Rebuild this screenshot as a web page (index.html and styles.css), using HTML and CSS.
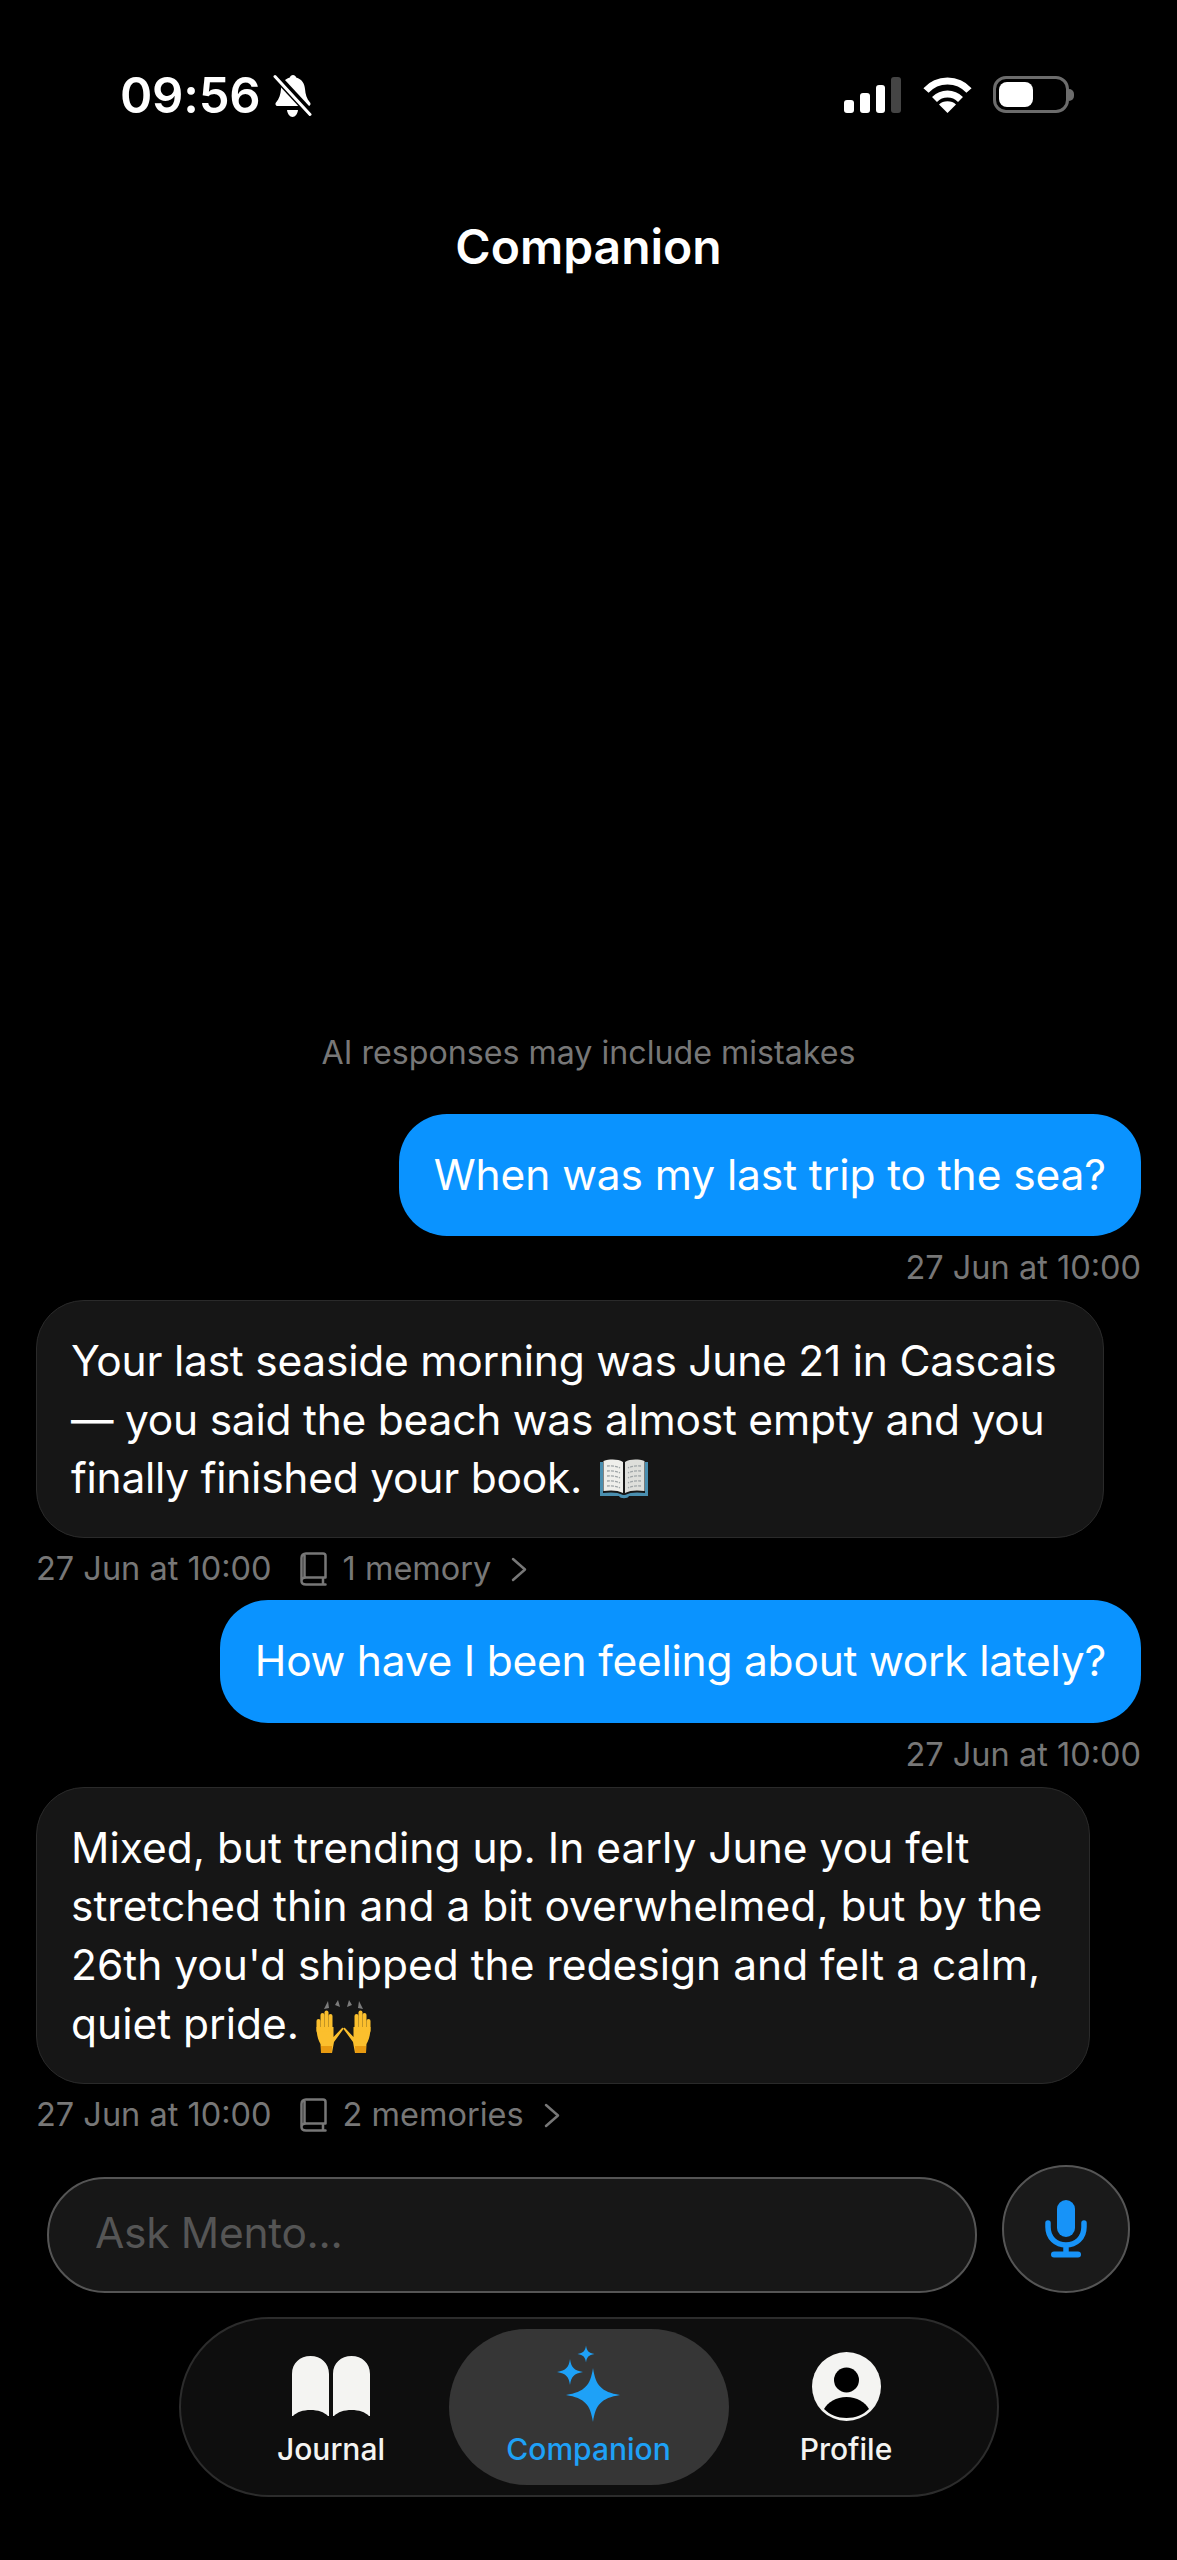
FILE: index.html
```html
<!DOCTYPE html>
<html lang="en">
<head>
    <meta charset="UTF-8">
    <meta name="viewport" content="width=device-width, initial-scale=1.0">
    <title>Companion</title>
    <link rel="stylesheet" href="styles.css">
</head>
<body>
    <div class="phone">
        <div class="status">
            <div class="status-left">
                <span class="clock">09:56</span>
                <svg class="bell" viewBox="0 0 40 44">
                    <path fill="#fff" d="M20 1c1.500 0 2.800 1.100 3.200 2.600 5.500 1.500 8.300 6 8.800 11.400.4 5 1.600 9.600 5 13.500 1.200 1.500.3 3.500-1.700 3.500H4.700c-2 0-2.900-2-1.700-3.500 3.400-3.900 4.600-8.500 5-13.500.5-5.400 3.300-9.900 8.800-11.400C17.200 2.100 18.500 1 20 1z"/>
                    <path fill="#fff" d="M14 36h11c-.5 4-2.800 7-5.500 7s-5-3-5.500-7z"/>
                    <path stroke="#000" stroke-width="8" d="M0 -1 40 42"/>
                    <path stroke="#fff" stroke-width="3" stroke-linecap="round" d="M2 2.500 37 40.500"/>
                </svg>
            </div>
            <div class="status-right">
                <div class="signal">
                    <i class="bar bar-1"></i>
                    <i class="bar bar-2"></i>
                    <i class="bar bar-3"></i>
                    <i class="bar bar-4"></i>
                </div>
                <svg class="wifi" viewBox="0 0 49 36">
                    <g fill="none" stroke="#fff" stroke-width="7">
                        <path d="M3 13.500C8.500 7.500 16 4 24.500 4S40.500 7.500 46 13.500"/>
                        <path d="M11.500 22.500C15 19 19.500 17 24.500 17S34 19 37.500 22.500"/>
                    </g>
                    <path fill="#fff" d="M24.500 36 16 27.500c2.200-2 5.200-3.200 8.500-3.200s6.300 1.200 8.500 3.200z"/>
                </svg>
                <div class="battery">
                    <div class="battery-body"><div class="battery-fill"></div></div>
                    <div class="battery-nub"></div>
                </div>
            </div>
        </div>

        <h1 class="title">Companion</h1>

        <div class="chat">
            <p class="notice">AI responses may include mistakes</p>

            <div class="bubble bubble-me">When was my last trip to the sea?</div>
            <div class="meta meta-me">27 Jun at 10:00</div>

            <div class="bubble bubble-ai bubble-tight">Your last seaside morning was June 21 in Cascais<br>— you said the beach was almost empty and you<br>finally finished your book. <svg class="emoji emoji-book" viewBox="0 0 48 41">
                    <path fill="#4a8fb0" d="M0 3h3v31c7-1 15-1 20 2h2c5-3 13-3 20-2V3h3v34H29c-1 3-9 3-10 0H0z"/>
                    <path fill="#efefeb" d="M3.500 2c6.500-2 14.500-2 19.500 1v31c-5-3-13-3-19.500-2z"/>
                    <path fill="#dedfdb" d="M44.500 2C38-.0 30-.0 25 3v31c5-3 13-3 19.500-2z"/>
                    <path fill="none" stroke="#a0a6a8" stroke-width="1.300" stroke-dasharray="3 1" d="M7 7c4-.5 9 0 13 2M7 12c4-.5 9 0 13 2M7 17c4-.5 9 0 13 2M7 22c4-.5 9 0 13 2M7 27c4-.5 9 0 13 2M41 7c-4-.5-9 0-13 2M41 12c-4-.5-9 0-13 2M41 17c-4-.5-9 0-13 2M41 22c-4-.5-9 0-13 2M41 27c-4-.5-9 0-13 2"/>
                </svg></div>
            <div class="meta meta-ai">
                <span>27 Jun at 10:00</span>
                <span class="memory">
                    <svg class="memory-book" viewBox="0 0 27 34"><path fill="none" stroke="#777" stroke-width="2.500" stroke-linejoin="round" stroke-linecap="round" d="M1.500 28.500V6c0-2.800 1.700-4.500 4.500-4.500h17c1.500 0 2.500 1 2.500 2.500v21.500H6c-3 0-4.500 1.500-4.500 3.500S3 32.500 6 32.500h19.500M23 25.500v7M4.500 3v22"/></svg>
                    1 memory
                    <svg class="chevron" viewBox="0 0 16 25"><path fill="none" stroke="#777" stroke-width="2.500" stroke-linecap="round" stroke-linejoin="round" d="M2 2l12 10.500L2 23"/></svg>
                </span>
            </div>

            <div class="bubble bubble-me bubble-tight">How have I been feeling about work lately?</div>
            <div class="meta meta-me">27 Jun at 10:00</div>

            <div class="bubble bubble-ai bubble-loose">Mixed, but trending up. In early June you felt<br>stretched thin and a bit overwhelmed, but by the<br>26th you'd shipped the redesign and felt a calm,<br>quiet pride. <svg class="emoji emoji-hands" viewBox="0 0 57 53">
                    <path fill="#7c7c7c" d="M9 9l4-8 1 7zM20 5l3-5 2 7zM32 7l2-7 3 5zM43 8l1-7 4 8z"/>
                    <g>
                        <path fill="#fbbf2d" d="M1.500 27h17v10L27 28c1-.8 2 .2 1.300 1.200L19 42l-2 11H6l-.5-9C3 40 1.500 34 1.500 27z"/>
                        <g fill="none" stroke="#fbbf2d" stroke-width="4" stroke-linecap="round">
                            <path d="M3.500 31V21"/>
                            <path d="M7.500 30V15"/>
                            <path d="M11.500 30V12.500"/>
                            <path d="M15.500 30V16"/>
                        </g>
                        <path fill="#e89a10" d="M6 46h11l-.3 7H6z"/>
                    </g>
                    <g transform="matrix(-1 0 0 1 57 0)">
                        <path fill="#fbbf2d" d="M1.500 27h17v10L27 28c1-.8 2 .2 1.300 1.200L19 42l-2 11H6l-.5-9C3 40 1.500 34 1.500 27z"/>
                        <g fill="none" stroke="#fbbf2d" stroke-width="4" stroke-linecap="round">
                            <path d="M3.500 31V21"/>
                            <path d="M7.500 30V15"/>
                            <path d="M11.500 30V12.500"/>
                            <path d="M15.500 30V16"/>
                        </g>
                        <path fill="#e89a10" d="M6 46h11l-.3 7H6z"/>
                    </g>
                </svg></div>
            <div class="meta meta-ai">
                <span>27 Jun at 10:00</span>
                <span class="memory">
                    <svg class="memory-book" viewBox="0 0 27 34"><path fill="none" stroke="#777" stroke-width="2.500" stroke-linejoin="round" stroke-linecap="round" d="M1.500 28.500V6c0-2.800 1.700-4.500 4.500-4.500h17c1.500 0 2.500 1 2.500 2.500v21.500H6c-3 0-4.500 1.500-4.500 3.500S3 32.500 6 32.500h19.500M23 25.500v7M4.500 3v22"/></svg>
                    2 memories
                    <svg class="chevron" viewBox="0 0 16 25"><path fill="none" stroke="#777" stroke-width="2.500" stroke-linecap="round" stroke-linejoin="round" d="M2 2l12 10.500L2 23"/></svg>
                </span>
            </div>
        </div>

        <div class="composer">
            <div class="ask">Ask Mento...</div>
            <div class="mic">
                <svg class="mic-icon" viewBox="0 0 42 58">
                    <rect x="12" y="0" width="18" height="37" rx="9" fill="#1793f8"/>
                    <path fill="none" stroke="#1793f8" stroke-width="5.500" stroke-linecap="round" d="M3 23v4c0 11 8 18 18 18s18-7 18-18v-4M21 45v9"/>
                    <rect x="6" y="51.500" width="30" height="6" rx="3" fill="#1793f8"/>
                </svg>
            </div>
        </div>

        <div class="tabbar">
            <div class="tab tab-first">
                <svg class="tab-icon icon-journal" viewBox="0 0 78 60">
                    <path fill="#f4f4f2" d="M0 60V18C0 7 8 0 18.500 0S37 7 37 18v42h-1c-4-4-10-6-17.500-6S5 56 1 60z"/>
                    <path fill="#f4f4f2" d="M78 60V18C78 7 70 0 59.500 0S41 7 41 18v42h1c4-4 10-6 17.500-6S73 56 77 60z"/>
                </svg>
                <span>Journal</span>
            </div>
            <div class="tab tab-active">
                <svg class="tab-icon icon-sparkle" viewBox="0 0 63 77">
                    <g fill="#1ea1f7">
                        <path transform="translate(36 50) scale(27)" d="M0-1C.1-.35.3-.12 1 0 .3.12.1.35 0 1-.1.35-.3.12-1 0-.3-.12-.1-.35 0-1z"/>
                        <path transform="translate(13 27) scale(13)" d="M0-1C.1-.35.3-.12 1 0 .3.12.1.35 0 1-.1.35-.3.12-1 0-.3-.12-.1-.35 0-1z"/>
                        <path transform="translate(29 9) scale(8.500)" d="M0-1C.1-.35.3-.12 1 0 .3.12.1.35 0 1-.1.35-.3.12-1 0-.3-.12-.1-.35 0-1z"/>
                    </g>
                </svg>
                <span>Companion</span>
            </div>
            <div class="tab tab-last">
                <svg class="tab-icon icon-profile" viewBox="0 0 69 69">
                    <circle cx="34.500" cy="34.500" r="34.500" fill="#f4f4f2"/>
                    <circle cx="34.500" cy="28" r="12.500" fill="#000"/>
                    <path fill="#000" d="M12 57c4-7 12-12 22.500-12S53 50 57 57c-6 6-13.500 9-22.500 9S18 63 12 57z"/>
                </svg>
                <span>Profile</span>
            </div>
        </div>
    </div>
</body>
</html>
```

FILE: styles.css
```css
* {
    box-sizing: border-box;
}
body {
    margin: 0;
    background: #000;
    font-family: 'Inter', 'Liberation Sans', sans-serif;
    color: #fff;
}
.phone {
    width: 1177px;
    height: 2560px;
    display: flex;
    flex-direction: column;
    background: #000;
    padding-bottom: 63px;
}

/* status bar */
.status {
    height: 125px;
    padding: 75px 103px 0 120px;
    display: flex;
    justify-content: space-between;
    align-items: flex-start;
}
.status-left {
    display: flex;
    align-items: center;
    gap: 13px;
    height: 42px;
}
.clock {
    font-size: 49px;
    font-weight: 600;
    line-height: 42px;
    letter-spacing: -0.2px;
}
.bell {
    width: 40px;
    height: 44px;
}
.status-right {
    display: flex;
    align-items: flex-start;
    height: 40px;
}
.signal {
    display: flex;
    align-items: flex-end;
    gap: 6px;
    height: 36px;
    width: 57px;
    margin-top: 2px;
}
.bar {
    width: 10px;
    background: #fff;
    border-radius: 3px;
}
.bar-1 { height: 13px; }
.bar-2 { height: 20px; }
.bar-3 { height: 28px; }
.bar-4 { height: 36px; background: #444; }
.wifi {
    width: 49px;
    height: 36px;
    margin: 2px 21px 0 22px;
}
.battery {
    display: flex;
    align-items: center;
    height: 37px;
    margin-top: 1px;
}
.battery-body {
    width: 76px;
    height: 37px;
    border: 3px solid #6c6c6c;
    border-radius: 13px;
    padding: 3px;
}
.battery-fill {
    width: 34px;
    height: 25px;
    background: #fff;
    border-radius: 8px;
}
.battery-nub {
    width: 5px;
    height: 12px;
    background: #6c6c6c;
    border-radius: 0 6px 6px 0;
}

.title {
    margin: 87px 0 0;
    height: 70px;
    text-align: center;
    font-size: 48px;
    line-height: 70px;
    font-weight: 600;
}

/* messages */
.chat {
    flex: 1;
    display: flex;
    flex-direction: column;
    justify-content: flex-end;
    padding: 0 36px 30px;
}
.notice {
    margin: 0 0 41px;
    text-align: center;
    font-size: 32.2px;
    line-height: 40px;
    color: #777;
}
.bubble {
    font-size: 42.5px;
    letter-spacing: -0.1px;
    line-height: 58.7px;
    white-space: nowrap;
    width: fit-content;
    padding: 32px 35px;
}
.bubble-me {
    align-self: flex-end;
    background: #0a93ff;
    border-radius: 48px;
}
.bubble-ai {
    background: #161616;
    border: 1px solid #2a2a2a;
    border-radius: 48px;
    padding: 30.5px 47px 29.5px 34px;
}
.bubble-tight {
    letter-spacing: -0.24px;
}
.bubble-loose {
    letter-spacing: 0;
}
.emoji {
    display: inline-block;
}
.emoji-book {
    width: 48px;
    height: 41px;
    margin: -20px 0 -7px 6px;
}
.emoji-hands {
    width: 57px;
    height: 53px;
    margin: -30px 0 -14px 4px;
}
.meta {
    font-size: 32.5px;
    line-height: 40px;
    color: #777;
    margin: 12px 0;
}
.meta-me {
    text-align: right;
}
.meta-ai {
    display: flex;
    align-items: center;
    gap: 28px;
    margin: 11px 0;
}
.memory {
    display: flex;
    align-items: center;
    gap: 16px;
}
.memory-book {
    width: 27px;
    height: 34px;
}
.chevron {
    width: 16px;
    height: 25px;
    margin-left: 4px;
}
.chat .meta:last-child {
    margin-bottom: 0;
}

/* input row */
.composer {
    display: flex;
    align-items: flex-end;
    padding: 0 47px;
    gap: 25px;
}
.ask {
    flex: 1;
    height: 116px;
    background: #171717;
    border: 2px solid #555;
    border-radius: 58px;
    padding-left: 46px;
    font-size: 42.5px;
    letter-spacing: -0.3px;
    line-height: 108px;
    color: #555;
}
.mic {
    width: 128px;
    height: 128px;
    flex: none;
    background: #1a1a1a;
    border: 2px solid #555;
    border-radius: 50%;
    display: flex;
    align-items: center;
    justify-content: center;
}
.mic-icon {
    width: 42px;
    height: 58px;
}

/* bottom tabs */
.tabbar {
    width: 820px;
    height: 180px;
    margin: 24px auto 0;
    background: #0e0e0e;
    border: 2px solid #2c2c2c;
    border-radius: 90px;
    display: grid;
    grid-template-columns: 268px 280px 1fr;
    padding: 10px 0;
}
.tab {
    display: flex;
    flex-direction: column;
    align-items: center;
    justify-content: flex-end;
    font-size: 30px;
    font-weight: 500;
    line-height: 40px;
    padding-bottom: 16px;
    color: #f4f4f2;
}
.tab-first {
    padding-left: 33px;
}
.tab-last {
    padding-right: 33px;
}
.tab-active {
    background: #363636;
    border-radius: 78px;
    color: #1ea1f7;
}
.tab-icon {
    display: block;
}
.icon-journal {
    width: 78px;
    height: 60px;
    margin-bottom: 13px;
}
.icon-sparkle {
    width: 63px;
    height: 77px;
    margin-bottom: 7px;
}
.icon-profile {
    width: 69px;
    height: 69px;
    margin-bottom: 8px;
}
```
